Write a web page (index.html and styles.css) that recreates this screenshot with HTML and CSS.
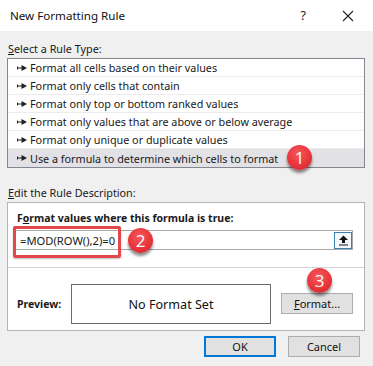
FILE: index.html
```html
<!DOCTYPE html>
<html>
<head>
<meta charset="utf-8">
<link rel="stylesheet" href="styles.css">
</head>
<body>
<div class="dialog">
  <div class="titlebar">
    <span class="title">New Formatting Rule</span>
    <span class="help">?</span>
    <svg class="close" width="12" height="12" viewBox="0 0 12 12"><path d="M1 1 L11 11 M11 1 L1 11" stroke="#222" stroke-width="1.1" fill="none"/></svg>
  </div>
  <div class="content">
    <div class="label"><u>S</u>elect a Rule Type:</div>
    <ul class="list">
      <li class="row"><svg class="bullet" width="10" height="6" viewBox="0 0 10 6"><path d="M0 1.5h1v3H0z M1 2.5h4v1H1z M4.5 0 L10 3 L4.5 6z" fill="#222"/></svg>Format all cells based on their values</li>
      <li class="row"><svg class="bullet" width="10" height="6" viewBox="0 0 10 6"><path d="M0 1.5h1v3H0z M1 2.5h4v1H1z M4.5 0 L10 3 L4.5 6z" fill="#222"/></svg>Format only cells that contain</li>
      <li class="row"><svg class="bullet" width="10" height="6" viewBox="0 0 10 6"><path d="M0 1.5h1v3H0z M1 2.5h4v1H1z M4.5 0 L10 3 L4.5 6z" fill="#222"/></svg>Format only top or bottom ranked values</li>
      <li class="row"><svg class="bullet" width="10" height="6" viewBox="0 0 10 6"><path d="M0 1.5h1v3H0z M1 2.5h4v1H1z M4.5 0 L10 3 L4.5 6z" fill="#222"/></svg>Format only values that are above or below average</li>
      <li class="row"><svg class="bullet" width="10" height="6" viewBox="0 0 10 6"><path d="M0 1.5h1v3H0z M1 2.5h4v1H1z M4.5 0 L10 3 L4.5 6z" fill="#222"/></svg>Format only unique or duplicate values</li>
      <li class="row selected"><svg class="bullet" width="10" height="6" viewBox="0 0 10 6"><path d="M0 1.5h1v3H0z M1 2.5h4v1H1z M4.5 0 L10 3 L4.5 6z" fill="#222"/></svg>Use a formula to determine which cells to format</li>
    </ul>
    <div class="label label2"><u>E</u>dit the Rule Description:</div>
    <div class="box">
      <div class="upper">
        <div class="bold">F<u>o</u>rmat values where this formula is true:</div>
        <div class="input">
          <span class="formula">=MOD(ROW(),2)=0</span>
          <span class="pick"><svg width="11" height="11" viewBox="0 0 11 11"><path d="M5.5 0.5 L10 5 L7 5 L7 8 L4 8 L4 5 L1 5z M1 9.5h9v1H1z" fill="#111"/></svg></span>
        </div>
      </div>
      <div class="lower">
        <span class="bold plabel">Preview:</span>
        <div class="preview">No Format Set</div>
        <button class="btn fmt"><u>F</u>ormat...</button>
      </div>
    </div>
    <div class="actions">
      <button class="btn ok">OK</button>
      <button class="btn cancel">Cancel</button>
    </div>
  </div>
  <div class="redbox"></div>
  <div class="badge b1">1</div>
  <div class="badge b2">2</div>
  <div class="badge b3">3</div>
</div>
</body>
</html>
```

FILE: styles.css
```css
* { box-sizing: border-box; }
html, body { margin: 0; padding: 0; }
body {
  width: 373px;
  height: 366px;
  overflow: hidden;
  background: #f0f0f0;
  font-family: "Noto Sans", "Open Sans", sans-serif;
  font-size: 10.8px;
  color: #1a1a1a;
}
.dialog { position: relative; width: 373px; height: 366px; }
.titlebar {
  height: 31px;
  background: #fff;
  display: flex;
  align-items: center;
  padding-left: 10px;
}
.title { font-size: 11.6px; flex: 1; color: #111; }
.help { font-size: 12.5px; margin-right: 36px; color: #222; }
.close { margin-right: 19px; }
.content { padding: 0 8px 0 7px; }
.label { line-height: 16px; padding-top: 10px; margin-bottom: 1px; padding-left: 1px; }
.label2 { padding-top: 17px; }
.list {
  list-style: none;
  margin: 0;
  padding: 0;
  border: 1px solid #828790;
  background: #fff;
}
.row {
  height: 18px;
  display: flex;
  align-items: center;
  padding-left: 9px;
  border-bottom: 1px solid #ececec;
  white-space: nowrap;
}
.row:last-child { border-bottom: none; }
.row.selected { background: #e1e1e6; }
.bullet { margin-right: 3px; flex: none; }
.box {
  border: 1px solid #b4b4b4;
  background: #fff;
  width: 358px;
}
.upper { height: 65px; border-bottom: 1px solid #d4d4d4; padding-top: 7px; }
.bold { font-weight: bold; line-height: 16px; padding-left: 9px; font-size: 10.5px; }
.input {
  margin: 4px 11px 0 7px;
  height: 20px;
  border: 1px solid #a8a8a8;
  display: flex;
  align-items: center;
  justify-content: space-between;
  font-size: 11.2px;
}
.formula { padding-left: 4px; }
.pick {
  width: 18px;
  height: 17px;
  border: 1px solid #3c7fb1;
  background: #f4f8fc;
  display: flex;
  align-items: center;
  justify-content: center;
}
.lower {
  height: 62px;
  display: flex;
  align-items: flex-start;
  padding-top: 16px;
}
.plabel { width: 63px; flex: none; margin-top: 12px; }
.preview {
  width: 200px;
  height: 40px;
  border: 1px solid #6b6b6b;
  display: flex;
  align-items: center;
  justify-content: center;
  font-size: 12.6px;
  color: #111;
}
.btn {
  font-family: inherit;
  font-size: 11px;
  color: #111;
  background: #e1e1e1;
  border: 1px solid #adadad;
  height: 21px;
  width: 72px;
  padding: 0;
  line-height: 19px;
}
.fmt { margin-left: 10px; margin-top: 9px; }
.actions {
  display: flex;
  justify-content: flex-end;
  gap: 12px;
  padding-top: 5px;
  padding-right: 5px;
}
.ok { border: 2px solid #0078d7; line-height: 17px; }
.redbox {
  position: absolute;
  left: 13px;
  top: 226px;
  width: 108px;
  height: 32px;
  border: 3px solid #e3474b;
  border-radius: 2px;
  box-shadow: 0 1px 2px rgba(0,0,0,0.25);
}
.badge {
  position: absolute;
  width: 25px;
  height: 25px;
  border-radius: 50%;
  background: radial-gradient(circle at 45% 35%, #f5595d 0%, #e8353b 55%, #c8232a 100%);
  color: #fff;
  font-size: 17px;
  display: flex;
  align-items: center;
  justify-content: center;
  box-shadow: 0 3px 3px rgba(0,0,0,0.45);
  font-family: "Open Sans", "Noto Sans", sans-serif;
}
.b1 { left: 287px; top: 145px; }
.b2 { left: 128px; top: 228px; }
.b3 { left: 307px; top: 268px; }
```
